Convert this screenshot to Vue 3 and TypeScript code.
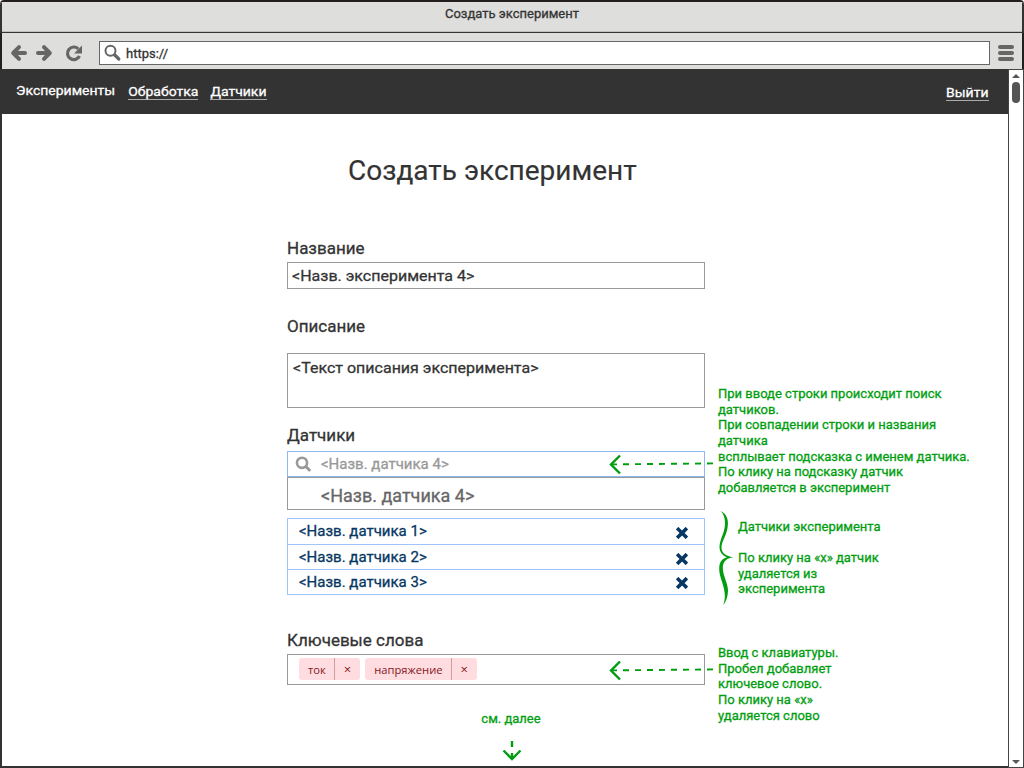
<script setup lang="ts">
interface Link { label: string; current?: boolean }

const pageTitle = 'Создать эксперимент'
const links: Link[] = [
  { label: 'Эксперименты', current: true },
  { label: 'Обработка' },
  { label: 'Датчики' },
]
const sensors: string[] = ['<Назв. датчика 1>', '<Назв. датчика 2>', '<Назв. датчика 3>']
const keywords: string[] = ['ток', 'напряжение']
const searchNote: string[] = [
  'При вводе строки происходит поиск',
  'датчиков.',
  'При совпадении строки и названия',
  'датчика',
  'всплывает подсказка с именем датчика.',
  'По клику на подсказку датчик',
  'добавляется в эксперимент',
]
const removeNote: string[] = ['По клику на «х» датчик', 'удаляется из', 'эксперимента']
const keywordNote: string[] = [
  'Ввод с клавиатуры.',
  'Пробел добавляет',
  'ключевое слово.',
  'По клику на «х»',
  'удаляется слово',
]
</script>

<template>
  <div class="window">
    <header class="titlebar"><span>{{ pageTitle }}</span></header>
    <div class="toolbar">
      <svg class="nav-icons" width="84" height="24" viewBox="0 0 84 24">
        <g fill="none" stroke="#666" stroke-width="4" stroke-linecap="round" stroke-linejoin="round">
          <path d="M15 6.200 9.200 12l5.800 5.800M10 12h11" />
          <path d="M40 6.200 45.800 12 40 17.800M45 12H34" />
        </g>
        <path d="M74.200 7.800A6.300 6.300 0 1 0 75.500 15" fill="none" stroke="#666" stroke-width="3.200" />
        <path d="M78 4.500v8h-8z" fill="#666" />
      </svg>
      <div class="address">
        <svg width="18" height="18" viewBox="0 0 18 18" fill="none" stroke="#666">
          <circle cx="6.500" cy="6.700" r="5" stroke-width="2" />
          <path d="M10.800 11l4 4" stroke-width="3.200" stroke-linecap="round" />
        </svg>
        <span>https://</span>
      </div>
      <div class="menu"><i></i><i></i><i></i></div>
    </div>
    <div class="viewport">
      <div class="page">
        <nav class="navbar">
          <a v-for="l in links" :key="l.label" :class="{ current: l.current }"><span class="wide">{{ l.label }}</span></a>
          <a class="logout"><span class="wide">Выйти</span></a>
        </nav>
        <main class="content">
          <h1>{{ pageTitle }}</h1>
          <form class="form">
            <label>Название</label>
            <div class="box name"><span class="wide">&lt;Назв. эксперимента 4&gt;</span></div>
            <label>Описание</label>
            <div class="box description"><span class="wide">&lt;Текст описания эксперимента&gt;</span></div>
            <label>Датчики</label>
            <div class="search">
              <svg width="18" height="18" viewBox="0 0 18 18" fill="none" stroke="#999">
                <circle cx="7" cy="7.800" r="5.100" stroke-width="2.600" />
                <path d="M11.300 12l3 3" stroke-width="3" stroke-linecap="round" />
              </svg>
              <span>&lt;Назв. датчика 4&gt;</span>
              <svg class="arrow" width="106" height="22" viewBox="0 0 106 22">
                <g fill="none" stroke="#009e0f" stroke-width="2.400">
                  <path d="M11 2.500 2 11.500l9 9" />
                  <path d="M2 11.400 104 10.400" stroke-width="1.900" stroke-dasharray="6 6" />
                </g>
              </svg>
              <div class="note search-note"><p v-for="t in searchNote" :key="t">{{ t }}</p></div>
            </div>
            <div class="suggestion">&lt;Назв. датчика 4&gt;</div>
            <div class="sensors">
              <div v-for="s in sensors" :key="s" class="sensor">
                <span>{{ s }}</span>
                <svg width="12" height="12" viewBox="0 0 12 12">
                  <path d="M2.400 2.400l7.200 7.200M9.600 2.400L2.400 9.600" stroke="#073763" stroke-width="3.600" stroke-linecap="square" />
                </svg>
              </div>
              <svg class="brace" width="20" height="96" viewBox="0 0 20 96">
                <path d="M2.500 1C9 4 11 10 9.500 18C8 27 3.500 31 3.500 38C3.800 44 9 46.500 16 47.300C9 48 4.800 51 4.800 58C5 66 9.500 72 10 80C10 86 8 92 5.200 95C7.500 89 7 84 6 79C4.500 71 1 66 1.200 58C1.400 51 5 48.500 9 47.300C4 45 1.300 42 1.500 36C2 29 6.500 23 7 14.500C7.200 9 6 4 2.500 1Z" fill="#009e0f" />
              </svg>
              <div class="note list-note"><p>Датчики эксперимента</p></div>
              <div class="note remove-note"><p v-for="t in removeNote" :key="t">{{ t }}</p></div>
            </div>
            <label>Ключевые слова</label>
            <div class="box keywords">
              <div v-for="k in keywords" :key="k" class="tag"><span class="word">{{ k }}</span><span class="close">×</span></div>
              <svg class="arrow" width="106" height="22" viewBox="0 0 106 22">
                <g fill="none" stroke="#009e0f" stroke-width="2.400">
                  <path d="M11 2.500 2 11.500l9 9" />
                  <path d="M2 11.400 104 10.400" stroke-width="1.900" stroke-dasharray="6 6" />
                </g>
              </svg>
              <div class="note keyword-note"><p v-for="t in keywordNote" :key="t">{{ t }}</p></div>
            </div>
          </form>
          <div class="more">
            <span>см. далее</span>
            <svg width="20" height="22" viewBox="0 0 20 22" fill="none" stroke="#009e0f" stroke-width="2.400">
              <path d="M10 1v6M10 13v6M1.500 10.500l8.500 8.500L18.500 10.500" />
            </svg>
          </div>
        </main>
      </div>
      <div class="scrollbar">
        <svg width="8" height="4" viewBox="0 0 8 4"><path d="M0 4 4 0l4 4z" fill="#555" /></svg>
        <div class="thumb"></div>
        <svg class="down" width="8" height="4" viewBox="0 0 8 4"><path d="M0 0l4 4 4-4z" fill="#555" /></svg>
      </div>
    </div>
  </div>
</template>

<style>
html, body { margin: 0; background: #fff; overflow: hidden; }
</style>

<style scoped>
* { box-sizing: border-box; }
.window { width: 1024px; height: 768px; display: flex; flex-direction: column; background: #fff; border-top: 2px solid #231f20; border-radius: 4px 4px 0 0; overflow: hidden; font: 400 13px/16px Roboto, "Liberation Sans", sans-serif; -webkit-text-stroke: 0.3px currentColor; color: #333; white-space: nowrap; }
.wide { display: inline-block; transform: scaleY(0.92); transform-origin: 0 78%; }
.titlebar { height: 31px; padding-top: 4px; display: flex; justify-content: center; background: #dededc; border: solid #333; border-width: 0 2px 1px; box-shadow: inset 0 -1px #bdbdbb; }
.toolbar { height: 36px; display: flex; background: #dededc; border: solid #231f20; border-width: 0 2px; }
.nav-icons { margin: 8px 0 0 2px; }
.address { width: 891px; height: 24px; margin: 8px 0 0 11px; padding-left: 4px; display: flex; align-items: center; background: #fff; border: 1px solid #666; font-size: 13px; }
.address svg { margin-right: 4px; }
.address span { margin-top: 1px; }
.menu { width: 16px; margin: 12px 0 0 8px; display: flex; flex-direction: column; gap: 2px; }
.menu i { height: 4px; border-radius: 2px; background: #666; }
.viewport { height: 699px; display: flex; }
.page { width: 1008px; height: 699px; border-left: 2px solid #333; border-bottom: 2px solid #333; }
.navbar { height: 45px; padding: 14px 19.500px 0 14px; display: flex; align-items: flex-start; background: #333; color: #fff; font-size: 14px; line-height: 14px; }
.navbar a { height: 16px; margin: 1px 12px 0 0; border-bottom: 1px solid #aaa; }
.navbar a.current { margin: 0 13px 0 0; border: 0; }
.navbar a.logout { margin: 2px 0 0 auto; }
.content { padding-left: 285px; }
h1 { margin: 40px 0 50px 61px; font: 400 28px/34px Roboto, "Liberation Sans", sans-serif; -webkit-text-stroke: 0.15px currentColor; }
.form { width: 418px; }
label { display: block; height: 20px; font-size: 17px; line-height: 20px; }
.box { border: 1px solid #999; font-size: 16px; position: relative; }
.name { height: 27px; margin: 4px 0 27px; padding: 0 4px; line-height: 26px; }
.name .wide { transform-origin: 0 70%; }
.description { height: 55px; margin: 17px 0 17px; padding: 4px 5px; line-height: 19px; }
.search { height: 26px; margin-top: 6px; padding-left: 7px; display: flex; align-items: center; border: 1px solid #8fb9f5; position: relative; font-size: 15px; color: #999; }
.search > span { margin-left: 8px; }
.suggestion { height: 33px; padding-left: 33px; border: 1px solid #999; font-size: 18px; line-height: 35px; color: #666; }
.sensors { height: 77px; margin: 8px 0 35px; border: 1px solid #9fc5f8; border-bottom: 0; position: relative; font-size: 15px; color: #073763; }
.sensor { height: 25px; padding: 0 16px 0 11px; display: flex; align-items: center; justify-content: space-between; border-bottom: 1px solid #9fc5f8; }
.sensor:first-child { height: 26px; }
.sensor:first-child span { margin-bottom: 2px; }
.sensor svg { margin-top: 3px; }
.sensor:nth-child(3) svg { margin-top: 1px; }
.keywords { height: 31px; margin-top: 4px; padding: 3px 11px; display: flex; gap: 5px; }
.tag { height: 22px; display: flex; border-radius: 3px; background: #ffdce0; color: #86181d; font: 400 11.200px/24px "Open Sans", sans-serif; -webkit-text-stroke: 0; }
.word { padding: 0 8px 0 9px; border-right: 1px solid #cf9ea3; }
.close { width: 25.500px; text-align: center; font-size: 13px; line-height: 23px; }
.arrow { position: absolute; left: 321px; top: 1px; }
.keywords .arrow { top: 4px; }
.note { position: absolute; color: #009e0f; font-size: 13px; line-height: 15.700px; }
.note p { margin: 0; height: 15.700px; }
.search-note { left: 430px; top: -66px; }
.brace { position: absolute; left: 430px; top: -9px; }
.list-note { left: 450px; top: 0; }
.remove-note { left: 450px; top: 31px; }
.keyword-note { left: 430px; top: -10px; }
.more { width: 60px; margin: 26px 0 0 194px; display: flex; flex-direction: column; align-items: center; color: #009e0f; }
.more svg { margin: 13px 0 0 2px; }
.scrollbar { width: 16px; height: 699px; border: 1px solid #444; display: flex; flex-direction: column; align-items: center; background: #fff; padding: 4px 0 3px; }
.thumb { width: 8px; height: 21px; margin-top: 4px; border-radius: 4px; background: #555; }
.down { margin-top: auto; }
</style>
